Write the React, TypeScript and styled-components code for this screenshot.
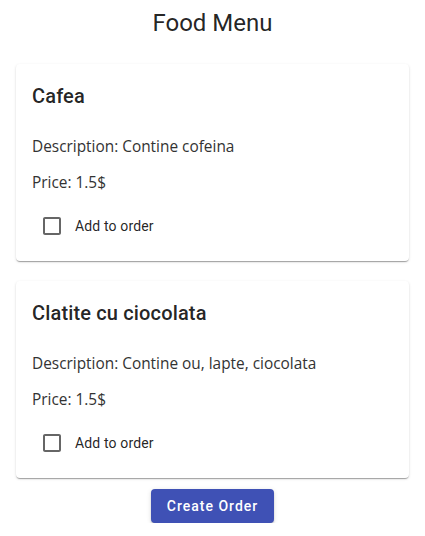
import React, { useState } from "react";
import styled, { createGlobalStyle } from "styled-components";

type Food = {
  name: string;
  description: string;
  price: number;
};

const foods: Food[] = [
  { name: "Cafea", description: "Contine cofeina", price: 1.5 },
  { name: "Clatite cu ciocolata", description: "Contine ou, lapte, ciocolata", price: 1.5 },
];

const GlobalStyle = createGlobalStyle`
  body {
    margin: 0;
    background: #fff;
    font-family: Roboto, "Liberation Sans", sans-serif;
    color: rgba(0, 0, 0, 0.87);
  }
`;

const Page = styled.div`
  display: flex;
  flex-direction: column;
  align-items: center;
  padding: 7px 16px 0;
`;

const Title = styled.h1`
  margin: 0 0 25px;
  font-size: 24px;
  font-weight: 400;
  line-height: 32px;
`;

const List = styled.div`
  align-self: stretch;
  display: flex;
  flex-direction: column;
  gap: 20px;
`;

const Card = styled.div`
  background: #fff;
  border-radius: 4px;
  padding: 16px 16px 14px;
  box-shadow: 0px 2px 1px -1px rgba(0, 0, 0, 0.2),
    0px 1px 1px 0px rgba(0, 0, 0, 0.14), 0px 1px 3px 0px rgba(0, 0, 0, 0.12);
`;

const Name = styled.h2`
  margin: 0 0 23px;
  font-size: 20px;
  font-weight: 500;
  line-height: 32px;
  letter-spacing: 0.15px;
`;

const Info = styled.p`
  margin: 0 0 12px;
  font-family: "Open Sans", "Noto Sans", sans-serif;
  font-size: 15.4px;
  line-height: 24px;
  color: #333;
`;

const CheckRow = styled.label`
  display: flex;
  align-items: center;
  height: 42px;
  margin-top: -2px;
  cursor: pointer;
`;

const Box = styled.span<{ $checked: boolean }>`
  width: 42px;
  height: 42px;
  margin-left: -1px;
  display: flex;
  align-items: center;
  justify-content: center;
  color: ${(p) => (p.$checked ? "#3f51b5" : "rgba(0, 0, 0, 0.6)")};
`;

const HiddenInput = styled.input`
  display: none;
`;

const CheckText = styled.span`
  margin-left: 2px;
  font-size: 14px;
  letter-spacing: 0.15px;
  color: rgba(0, 0, 0, 0.87);
`;

const OrderButton = styled.button`
  margin: 11px 0 0;
  height: 34px;
  padding: 0 16px;
  border: none;
  border-radius: 4px;
  background: #3f51b5;
  color: #fff;
  font-family: Roboto, "Liberation Sans", sans-serif;
  font-size: 14px;
  font-weight: 500;
  letter-spacing: 1px;
  cursor: pointer;
  box-shadow: 0px 3px 1px -2px rgba(0, 0, 0, 0.2),
    0px 2px 2px 0px rgba(0, 0, 0, 0.14), 0px 1px 5px 0px rgba(0, 0, 0, 0.12);
`;

const CheckIcon = ({ checked }: { checked: boolean }) =>
  checked ? (
    <svg width="24" height="24" viewBox="0 0 24 24" fill="currentColor">
      <path d="M19 3H5c-1.11 0-2 .9-2 2v14c0 1.1.89 2 2 2h14c1.11 0 2-.9 2-2V5c0-1.1-.89-2-2-2zm-9 14l-5-5 1.41-1.41L10 14.170l7.59-7.59L19 8l-9 9z" />
    </svg>
  ) : (
    <svg width="24" height="24" viewBox="0 0 24 24" fill="currentColor">
      <path d="M19 5v14H5V5h14m0-2H5c-1.1 0-2 .9-2 2v14c0 1.1.9 2 2 2h14c1.1 0 2-.9 2-2V5c0-1.1-.9-2-2-2z" />
    </svg>
  );

const FoodCard = ({ food }: { food: Food }) => {
  const [checked, setChecked] = useState(false);
  return (
    <Card>
      <Name>{food.name}</Name>
      <Info>Description: {food.description}</Info>
      <Info>Price: {food.price}$</Info>
      <CheckRow>
        <HiddenInput
          type="checkbox"
          checked={checked}
          onChange={(e) => setChecked(e.target.checked)}
        />
        <Box $checked={checked}>
          <CheckIcon checked={checked} />
        </Box>
        <CheckText>Add to order</CheckText>
      </CheckRow>
    </Card>
  );
};

export default function App() {
  return (
    <>
      <GlobalStyle />
      <Page>
        <Title>Food Menu</Title>
        <List>
          {foods.map((f) => (
            <FoodCard key={f.name} food={f} />
          ))}
        </List>
        <OrderButton>Create Order</OrderButton>
      </Page>
    </>
  );
}
